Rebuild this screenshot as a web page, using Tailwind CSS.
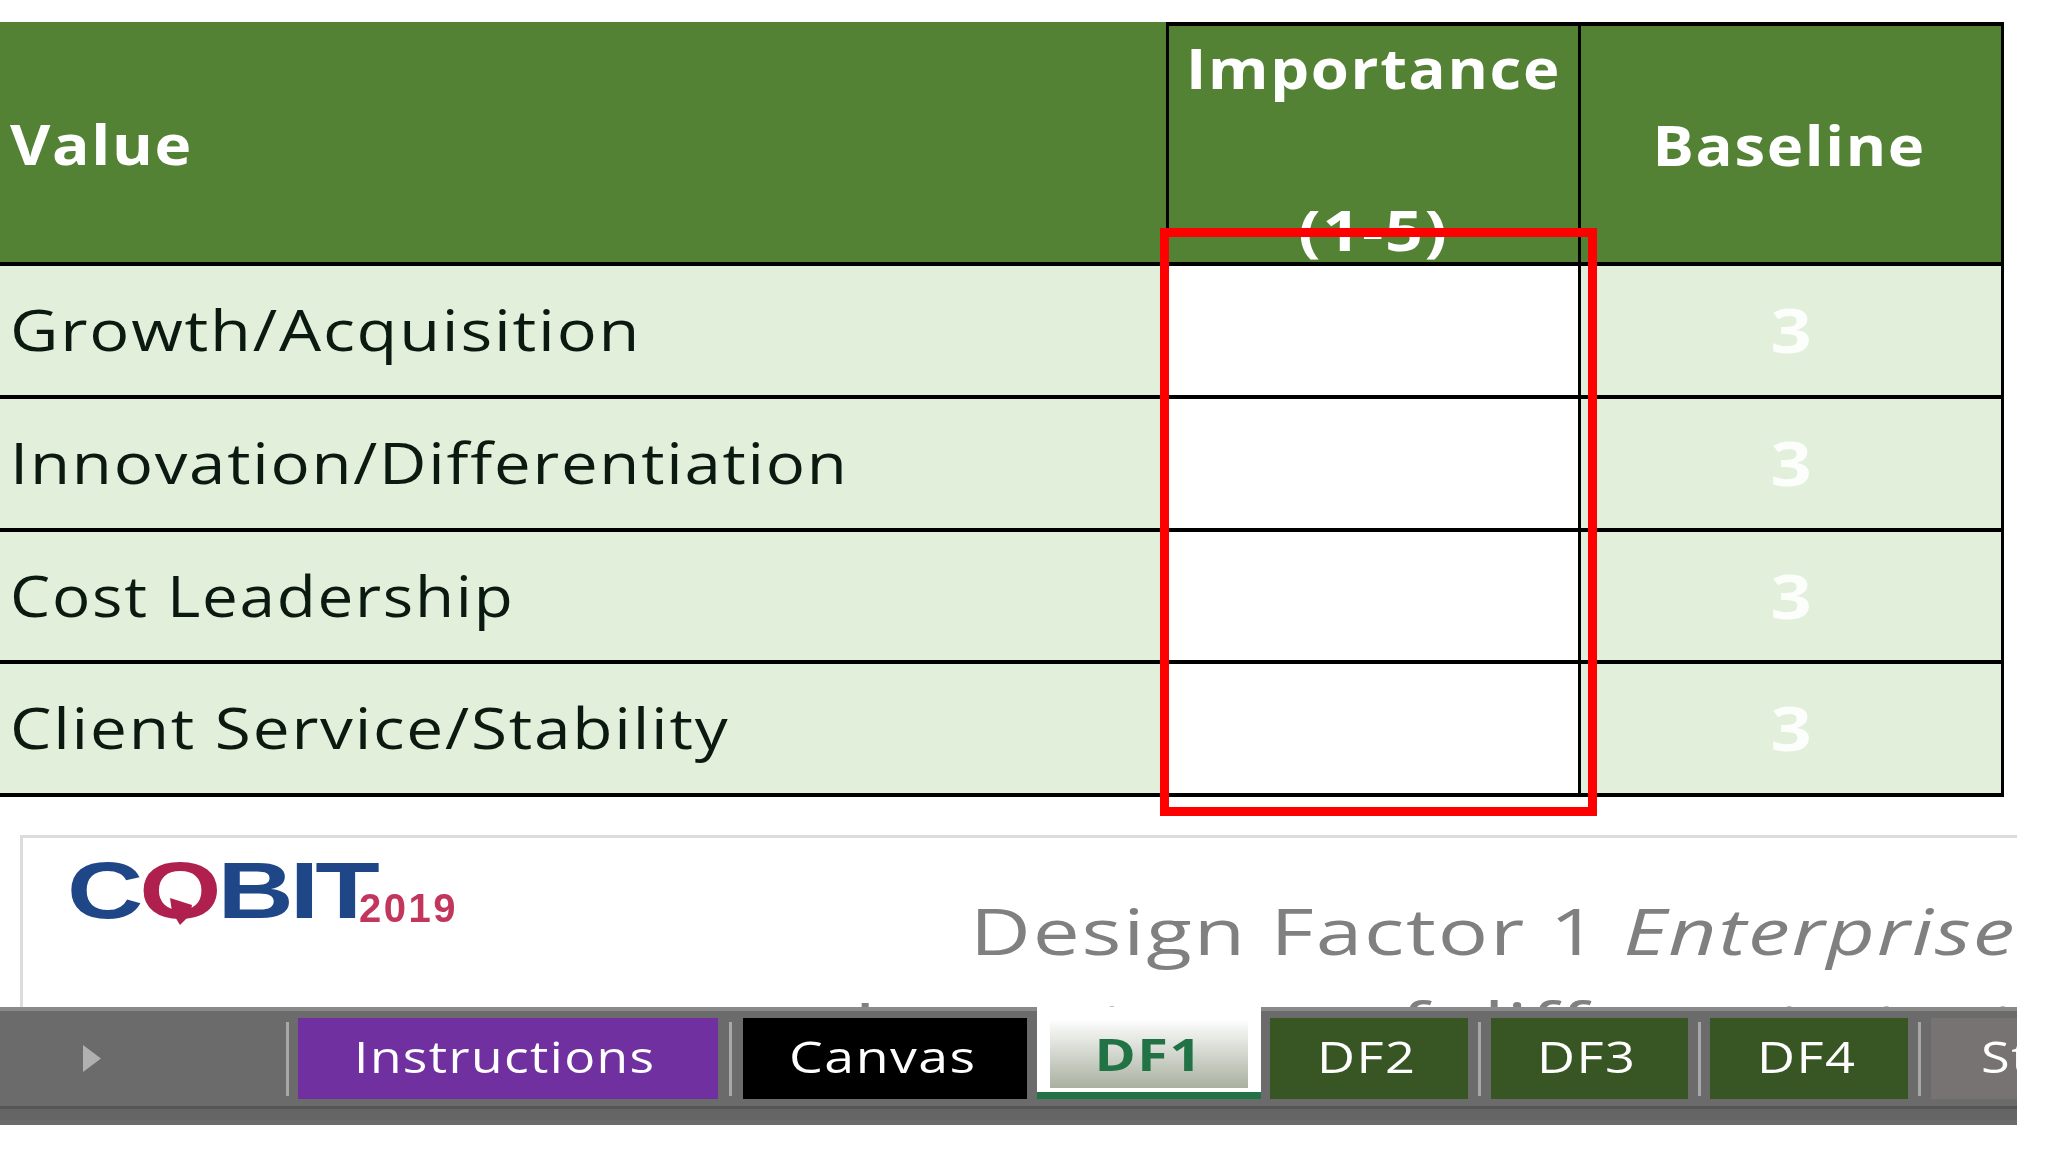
<!DOCTYPE html>
<html lang="en">
<head>
  <meta charset="UTF-8" />
  <title>Design Factor 1</title>
  <script src="https://cdn.jsdelivr.net/npm/@tailwindcss/browser@4"></script>
</head>
<body class="bg-white font-['Open_Sans',sans-serif] w-[2048px] h-[1152px] overflow-hidden relative">

  <!-- value table -->
  <div class="pt-[22px] w-[2004px]">
    <div class="grid grid-cols-[1166px_412px_426px] text-[56px] leading-none">
      <div class="h-[244px] bg-[#548235] border-b-[4px] border-black flex items-center pl-[10px] text-white font-bold tracking-[1.5px]"><span class="mt-[2px] origin-left scale-x-[1.11]">Value</span></div>
      <div class="relative h-[244px] bg-[#548235] border-[3px] border-t-[4px] border-b-[4px] border-r-0 border-black text-white font-bold text-center tracking-[1.5px] overflow-hidden">
        <div class="absolute inset-x-0 top-[13px] scale-x-[1.1]">Importance</div>
        <div class="absolute inset-x-0 top-[175px] scale-x-[1.18]">(1-5)</div>
      </div>
      <div class="h-[244px] bg-[#548235] border-[3px] border-t-[4px] border-b-[4px] border-black flex items-center justify-center text-white font-bold tracking-[1.5px]"><span class="-mt-[1px] -ml-[3px] scale-x-[1.1]">Baseline</span></div>

      <div class="h-[133px] bg-[#e2efda] border-b-[4px] border-black flex items-center pl-[10px] text-[#0b1a10] tracking-[1.5px]"><span class="-mt-[3px] origin-left scale-x-[1.19]">Growth/Acquisition</span></div>
      <div class="h-[133px] bg-white border-l-[3px] border-b-[4px] border-black"></div>
      <div class="h-[133px] bg-[#e2efda] border-x-[3px] border-b-[4px] border-black flex items-center justify-center text-white/90 font-bold text-[60px]"><span class="-mt-[1px] scale-x-[1.2]">3</span></div>

      <div class="h-[133px] bg-[#e2efda] border-b-[4px] border-black flex items-center pl-[10px] text-[#0b1a10] tracking-[1.5px]"><span class="-mt-[3px] origin-left scale-x-[1.167]">Innovation/Differentiation</span></div>
      <div class="h-[133px] bg-white border-l-[3px] border-b-[4px] border-black"></div>
      <div class="h-[133px] bg-[#e2efda] border-x-[3px] border-b-[4px] border-black flex items-center justify-center text-white/90 font-bold text-[60px]"><span class="-mt-[1px] scale-x-[1.2]">3</span></div>

      <div class="h-[132px] bg-[#e2efda] border-b-[4px] border-black flex items-center pl-[10px] text-[#0b1a10] tracking-[1.5px]"><span class="-mt-[3px] origin-left scale-x-[1.14]">Cost Leadership</span></div>
      <div class="h-[132px] bg-white border-l-[3px] border-b-[4px] border-black"></div>
      <div class="h-[132px] bg-[#e2efda] border-x-[3px] border-b-[4px] border-black flex items-center justify-center text-white/90 font-bold text-[60px]"><span class="-mt-[1px] scale-x-[1.2]">3</span></div>

      <div class="h-[133px] bg-[#e2efda] border-b-[4px] border-black flex items-center pl-[10px] text-[#0b1a10] tracking-[1.5px]"><span class="-mt-[3px] origin-left scale-x-[1.175]">Client Service/Stability</span></div>
      <div class="h-[133px] bg-white border-l-[3px] border-b-[4px] border-black"></div>
      <div class="h-[133px] bg-[#e2efda] border-x-[3px] border-b-[4px] border-black flex items-center justify-center text-white/90 font-bold text-[60px]"><span class="-mt-[1px] scale-x-[1.2]">3</span></div>
    </div>
  </div>

  <!-- red highlight over the importance column -->
  <div class="absolute left-[1160px] top-[228px] w-[437px] h-[588px] border-[9px] border-[#ff0000]"></div>

  <!-- embedded sheet picture -->
  <div class="mt-[38px] ml-[20px] w-[1997px] h-[172px] border-l-[3px] border-t-[3px] border-[#dcdcdc] relative overflow-hidden">
    <div class="absolute left-[44px] top-[14px] flex items-end font-['Liberation_Sans',sans-serif] font-bold blur-[0.7px]">
      <div class="relative w-[292px] h-[78px] text-[80px] leading-[78px] tracking-[-3px] text-[#1f4788] origin-left scale-x-[1.32] whitespace-nowrap">C<span class="text-[#b0204f]">O</span>BIT</div>
      <div class="text-[40px] leading-none text-[#c2365e] mb-[2px] tracking-[2.5px]">2019</div>
    </div>
    <svg class="absolute left-[147px] top-[60px] blur-[0.7px]" width="22" height="27" viewBox="0 0 22 27"><path d="M0 0L22 7L20 17L10 27L2 14Z" fill="#b0204f"/></svg>
    <div class="absolute left-[947px] top-[46px] whitespace-nowrap text-[64px] leading-[94px] text-[#808080] tracking-[1.4px] origin-left scale-x-[1.31]">
      <div>Design Factor 1 <em>Enterprise</em></div>
      <div class="-ml-[89px]">Importance of different strategies</div>
    </div>
  </div>

  <!-- sheet tabs -->
  <div class="w-[2017px] h-[118px] bg-[#6b6b6b] overflow-hidden">
    <div class="h-[4px] bg-[#8a8a8a]"></div>
    <div class="h-[88px] pt-[7px] flex items-start text-[44px] leading-none text-white tracking-[1.2px]">
      <div class="w-[286px] h-[81px] flex items-center pl-[83px]">
        <svg width="18" height="27" viewBox="0 0 18 27"><path d="M0 0L18 13.5L0 27Z" fill="#b0b0b0"/></svg>
      </div>
      <div class="w-[3px] h-[74px] mt-[4px] bg-[#a8a8a8]"></div>
      <div class="ml-[9px] w-[420px] h-[81px] bg-[#7030a0] flex items-center justify-center"><span class="-mt-[5px] -ml-[7px] scale-x-[1.17]">Instructions</span></div>
      <div class="ml-[11px] w-[3px] h-[74px] mt-[4px] bg-[#a8a8a8]"></div>
      <div class="ml-[11px] w-[284px] h-[81px] bg-black flex items-center justify-center"><span class="-mt-[5px] -ml-[4px] scale-x-[1.22]">Canvas</span></div>
      <div class="ml-[10px] w-[224px] h-[92px] -mt-[11px] bg-white flex flex-col">
        <div class="mx-[13px] h-[81px] bg-gradient-to-b from-white from-15% to-[#a9b0a0] flex items-center justify-center font-bold text-[#217346]"><span class="mt-[12px] scale-x-[1.27]">DF1</span></div>
        <div class="mt-auto h-[7px] bg-[#217346]"></div>
      </div>
      <div class="ml-[9px] w-[198px] h-[81px] bg-[#375623] flex items-center justify-center"><span class="-mt-[5px] -ml-[5px] scale-x-[1.19]">DF2</span></div>
      <div class="ml-[10px] w-[3px] h-[74px] mt-[4px] bg-[#a8a8a8]"></div>
      <div class="ml-[10px] w-[197px] h-[81px] bg-[#375623] flex items-center justify-center"><span class="-mt-[5px] -ml-[5px] scale-x-[1.19]">DF3</span></div>
      <div class="ml-[10px] w-[3px] h-[74px] mt-[4px] bg-[#a8a8a8]"></div>
      <div class="ml-[9px] w-[198px] h-[81px] bg-[#375623] flex items-center justify-center"><span class="-mt-[5px] -ml-[5px] scale-x-[1.19]">DF4</span></div>
      <div class="ml-[10px] w-[3px] h-[74px] mt-[4px] bg-[#a8a8a8]"></div>
      <div class="ml-[10px] w-[86px] h-[81px] bg-[#777373] flex items-center pl-[50px] overflow-hidden"><span class="-mt-[5px] origin-left scale-x-[1.19]">St</span></div>
    </div>
    <div class="h-[3px] mt-[7px] bg-[#555555]"></div>
    <div class="h-[11px] bg-[#656565]"></div>
  </div>

</body>
</html>
